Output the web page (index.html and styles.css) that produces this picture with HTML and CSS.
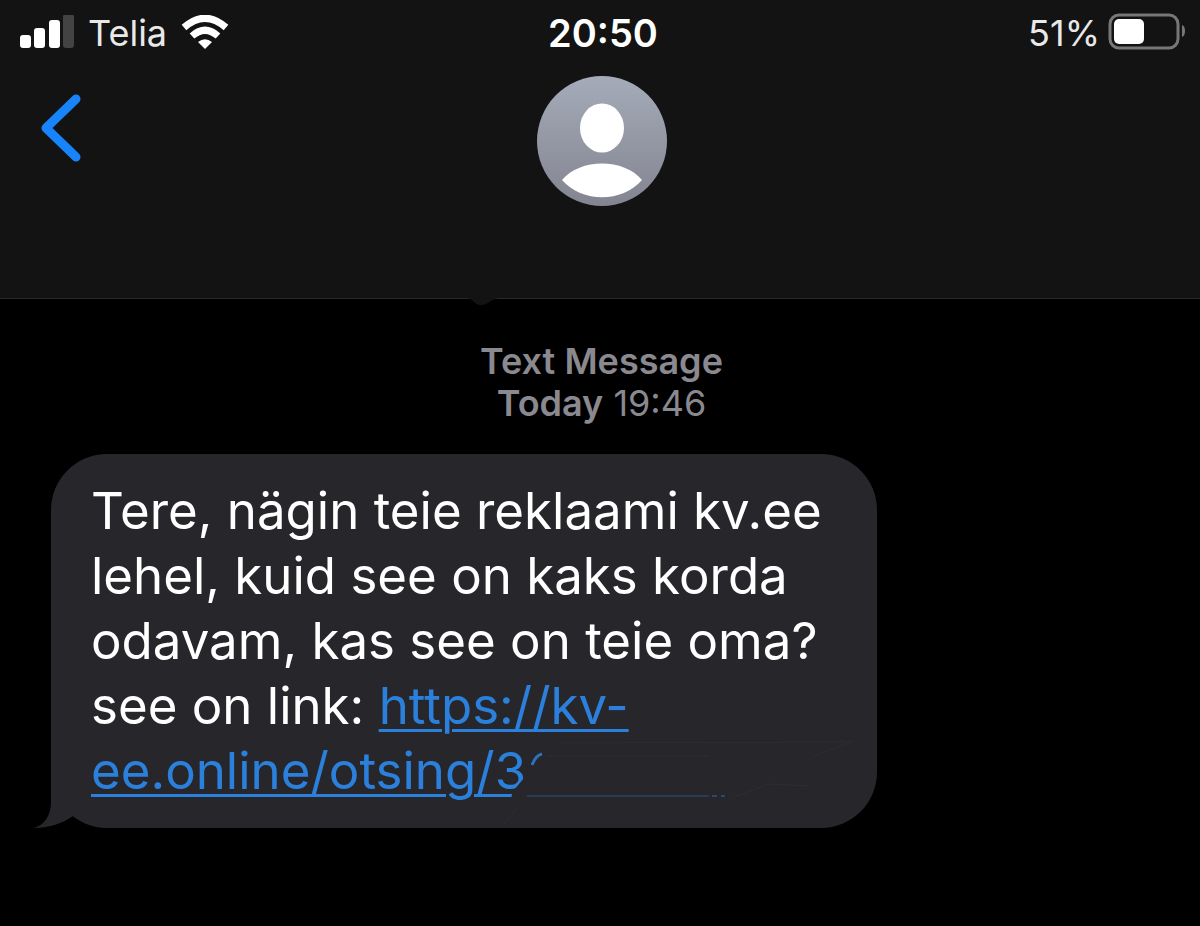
FILE: index.html
```
<!DOCTYPE html>
<html lang="et">
<head>
    <meta charset="UTF-8">
    <meta name="viewport" content="width=device-width, initial-scale=1.0">
    <title>Text Message</title>
    <link rel="stylesheet" href="styles.css">
</head>
<body>
    <header class="header">
        <div class="status-bar">
            <div class="carrier">
                <svg class="signal" width="54" height="36" viewBox="0 0 54 36" aria-hidden="true">
                    <rect x="0" y="20" width="11" height="13" rx="3" fill="#fff"/>
                    <rect x="14" y="13" width="11" height="20" rx="3" fill="#fff"/>
                    <rect x="29" y="5" width="11" height="28" rx="3" fill="#fff"/>
                    <rect x="43" y="-1" width="11" height="34" rx="3" fill="#434344"/>
                </svg>
                <span>Telia</span>
                <svg class="wifi" width="48" height="36" viewBox="0 0 48 36" aria-hidden="true">
                    <path d="M3 12.5Q24-6 45 12.5" fill="none" stroke="#fff" stroke-width="7"/>
                    <path d="M11 21Q24 9.500 37 21" fill="none" stroke="#fff" stroke-width="7"/>
                    <path d="M17 27Q24 21.500 31 27L24 34Z" fill="#fff"/>
                </svg>
            </div>
            <time class="clock">20:50</time>
            <div class="battery">
                <span>51%</span>
                <svg width="78" height="40" viewBox="0 0 78 40" aria-hidden="true">
                    <rect x="2" y="2" width="68" height="33" rx="9" fill="none" stroke="#77777a" stroke-width="3"/>
                    <rect x="6" y="6" width="30" height="25" rx="5" fill="#fff"/>
                    <path d="M74 12Q77 13 77 18T74 24Z" fill="#77777a"/>
                </svg>
            </div>
        </div>

        <div class="nav">
            <button class="back" type="button" aria-label="Back">
                <svg width="42" height="70" viewBox="0 0 42 70" aria-hidden="true">
                    <path d="M36 6L6 35L36 64" fill="none" stroke="#1784fb" stroke-width="9" stroke-linecap="round" stroke-linejoin="round"/>
                </svg>
            </button>
            <svg class="avatar" width="130" height="130" viewBox="0 0 130 130" role="img" aria-label="Contact">
                <defs>
                    <linearGradient id="avatarFill" x1="0" y1="0" x2="0" y2="1">
                        <stop offset="0" stop-color="#a5abb9"/>
                        <stop offset="1" stop-color="#838590"/>
                    </linearGradient>
                </defs>
                <circle cx="65" cy="65" r="65" fill="url(#avatarFill)"/>
                <ellipse cx="65" cy="52" rx="22" ry="24.500" fill="#fff"/>
                <path d="M25 104C43 82 87 82 105 104C85 127 45 127 25 104Z" fill="#fff"/>
            </svg>
        </div>

        <svg class="notch" width="30" height="8" viewBox="0 0 30 8" aria-hidden="true">
            <path d="M0 0H30C22 2 20 7 13 7S6 2 0 0Z" fill="#131314"/>
        </svg>
    </header>

    <main class="thread">
        <div class="stamp">
            <b>Text Message</b><br>
            <b>Today</b> 19:46
        </div>

        <div class="bubble">
            <p class="text">
                Tere, nägin teie reklaami kv.ee<br>
                lehel, kuid see on kaks korda<br>
                odavam, kas see on teie oma?<br>
                see on link: <a href="#">https://kv-<br>ee.online/otsing/3</a>
            </p>
            <!-- smeared out end of the link -->
            <svg class="smear" width="370" height="90" viewBox="0 0 370 90" aria-hidden="true">
                <path d="M50 8L355 0L365 4L310 52L230 75L20 88L12 64C12 50 22 47 27 36C32 27 40 22 50 20Z" fill="#27262b"/>
                <path d="M33 27Q37 17 43 16" fill="none" stroke="#2c73bd" stroke-width="3"/>
                <path d="M28 58H210" stroke="#283c58" stroke-width="2"/>
                <path d="M213 58H218M222 58H226" stroke="#2c486d" stroke-width="2"/>
                <path d="M60 5L352 4L315 18M48 18H210M235 59L270 46L310 48M18 70L4 87" fill="none" stroke="#2d2d33" stroke-width="1"/>
            </svg>
            <svg class="tail" width="44" height="60" viewBox="0 0 44 60" aria-hidden="true">
                <path d="M17 0V34C17 48 10 57 0 60C14 60 28 56 39 48L44 30V0Z" fill="#27262b"/>
            </svg>
        </div>
    </main>
</body>
</html>
```
FILE: styles.css
```
* {
    box-sizing: border-box;
}
body {
    margin: 0;
    background: #000;
    color: #fff;
    font-family: Inter, "Liberation Sans", sans-serif;
}
.header {
    position: relative;
    padding-bottom: 92px;
    background: #131314;
    border-bottom: 1px solid #29292a;
}
.status-bar {
    display: grid;
    grid-template-columns: 1fr auto 1fr;
    align-items: center;
    height: 66px;
    padding: 0 14px 0 20px;
    font-size: 36px;
    color: #e9e9ea;
}
.carrier, .battery {
    display: flex;
    align-items: center;
}
.carrier {
    gap: 14px;
}
.battery {
    justify-content: flex-end;
    gap: 8px;
}
.clock {
    font-size: 38px;
    font-weight: 600;
    color: #fff;
}
.nav {
    display: grid;
    grid-template-columns: 1fr auto 1fr;
    align-items: start;
    padding: 10px 36px 0 40px;
}
.back {
    justify-self: start;
    margin-top: 17px;
    padding: 0;
    border: 0;
    background: none;
    cursor: pointer;
}
.back svg, .avatar {
    display: block;
}
.notch {
    position: absolute;
    left: 39%;
    bottom: -8px;
}
.thread {
    padding: 41px 48px 96px 51px;
}
.stamp {
    text-align: center;
    font-size: 36px;
    line-height: 42px;
    color: #8a898f;
}
.stamp b {
    font-weight: 600;
}
.bubble {
    position: relative;
    width: 75%;
    margin-top: 30px;
    padding: 24px 40px 25px;
    border-radius: 56px;
    background: #27262b;
}
.text {
    margin: 0;
    font-size: 51px;
    line-height: 65px;
    white-space: nowrap;
}
.text a {
    color: #2b80dc;
    text-decoration-thickness: 3px;
    text-underline-offset: 5px;
}
.smear {
    position: absolute;
    left: 448px;
    bottom: 0;
}
.tail {
    position: absolute;
    left: -17px;
    bottom: 0;
}
```
